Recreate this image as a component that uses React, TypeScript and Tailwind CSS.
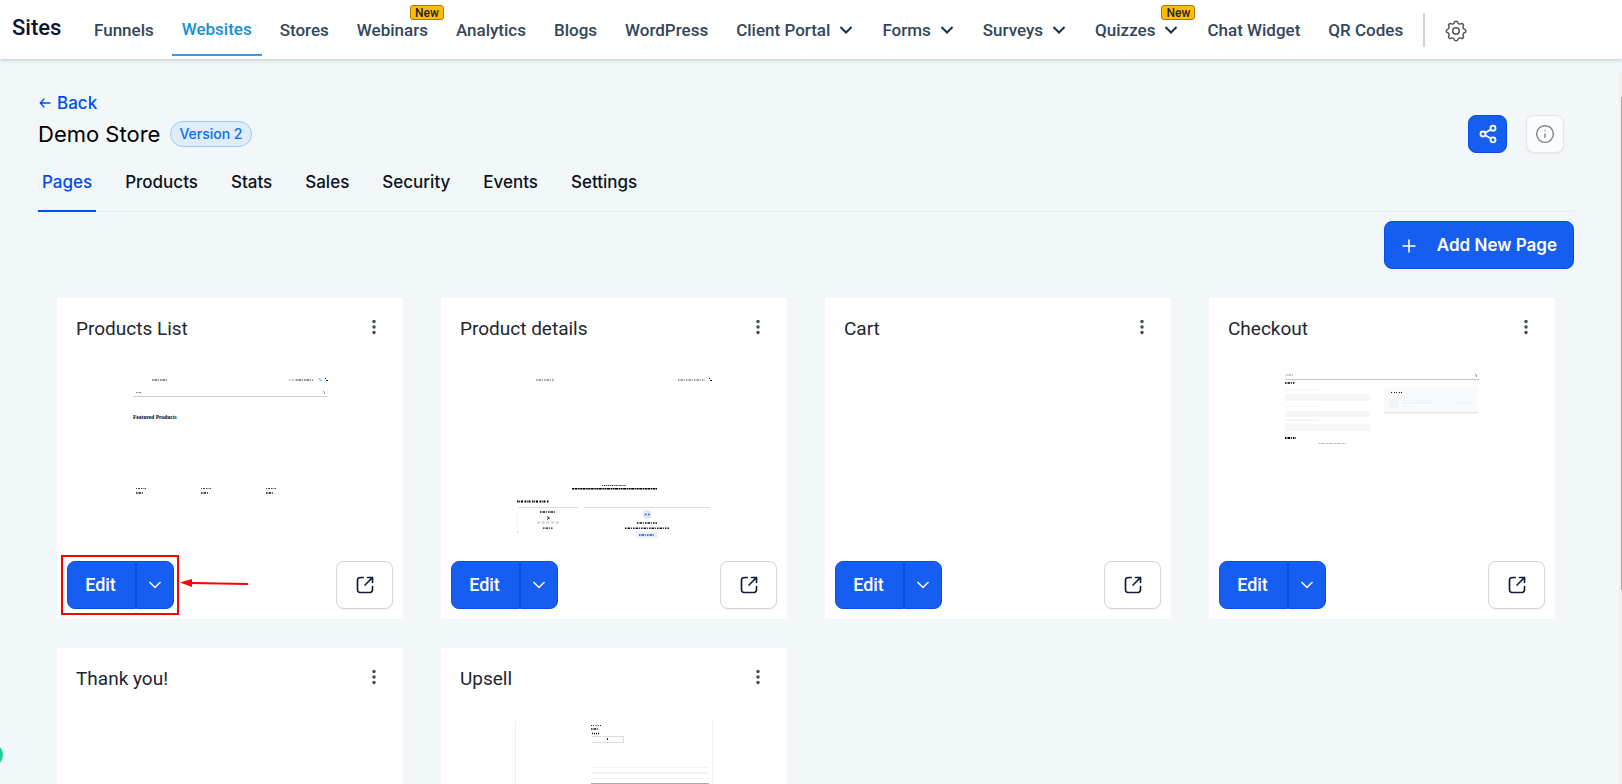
import React from "react";

type NavItem = { label: string; active?: boolean; badge?: boolean; menu?: boolean };

const NAV: NavItem[] = [
  { label: "Funnels" },
  { label: "Websites", active: true },
  { label: "Stores" },
  { label: "Webinars", badge: true },
  { label: "Analytics" },
  { label: "Blogs" },
  { label: "WordPress" },
  { label: "Client Portal", menu: true },
  { label: "Forms", menu: true },
  { label: "Surveys", menu: true },
  { label: "Quizzes", menu: true, badge: true },
  { label: "Chat Widget" },
  { label: "QR Codes" },
];

const TABS = ["Pages", "Products", "Stats", "Sales", "Security", "Events", "Settings"];

function Chevron({ className }: { className: string }) {
  return (
    <svg viewBox="0 0 16 16" className={className} fill="none" stroke="currentColor" aria-hidden="true">
      <path d="M2.5 5l5.500 5.500L13.500 5" />
    </svg>
  );
}

/* A row of greeked text: short dashes standing in for words too small to read. */
function Greek({ x, y, w, h = 1, color = "#111", dash = "1.5 1 2.5 .8 1 1.2" }: {
  x: number; y: number; w: number; h?: number; color?: string; dash?: string;
}) {
  return <path d={`M${x} ${y}h${w}`} stroke={color} strokeWidth={h} strokeDasharray={dash} />;
}

function ProductsPreview() {
  return (
    <>
      <Greek x={95} y={20} w={15} />
      <Greek x={232} y={20} w={8} color="#999" />
      <Greek x={239} y={20} w={17} />
      <path d="M261.500 18.500h1v1h1v1h1" stroke="#4aa8e0" fill="none" strokeWidth=".8" />
      <path d="M268 18.500h1M269 20.500h2" stroke="#222" />
      <Greek x={79} y={32.5} w={6} color="#888" />
      <path d="M266 31l1.500 1.500v1.500" stroke="#777" fill="none" strokeWidth=".8" />
      <path d="M76 36.500h194" stroke="#ccc" />
      <text x="76" y="59" fontSize="5.500" fontWeight="700" fill="#000" fontFamily="Liberation Serif, serif">Featured Products</text>
      {[79, 144, 209].map((x) => (
        <g key={x}>
          <Greek x={x} y={128.5} w={10} color="#444" dash="1 1 2 1 1 .5" />
          <Greek x={x} y={133} w={8} h={1.5} />
        </g>
      ))}
    </>
  );
}

function DetailsPreview() {
  return (
    <>
      <Greek x={95} y={20} w={18} color="#444" />
      <Greek x={237} y={20} w={27} color="#444" />
      <path d="M268 18.500h1M269 20.500h2" stroke="#222" />
      <Greek x={161} y={125.5} w={24} color="#333" dash="1 .8 1.500 .6" />
      <Greek x={131} y={128.8} w={85} h={1.5} color="#000" dash="2 .5 3 .6 1.500 .5" />
      <Greek x={76} y={141.5} w={32} h={2} color="#000" dash="1.500 .7 1 .8 2 1.500" />
      <path d="M77 147.500h60M143 147.500h126" stroke="#ddd" />
      <path d="M76.500 149v23" stroke="#f5f5f5" />
      <path d="M76 172.500h1" stroke="#bbb" />
      <Greek x={99} y={152} w={16} h={1.4} />
      <path d="M106 156.500l2.500 1.500-2.500 1.500" stroke="#111" fill="none" strokeWidth=".9" />
      <path d="M96 162.500h22" stroke="#d3d6e2" strokeWidth="2.500" strokeDasharray="3 1.700" />
      <Greek x={102} y={168.2} w={10} h={1.3} />
      <circle cx="206" cy="154.500" r="4.500" fill="#dbe6fd" />
      <path d="M204 154.500h1.500M207 154.500h1.500" stroke="#2b4be8" strokeWidth="1.500" />
      <Greek x={196} y={163} w={20} h={1.5} />
      <Greek x={184} y={168.2} w={44} h={1.4} />
      <path d="M195 172h22v6h-22z" fill="#eaf1fe" />
      <Greek x={198} y={175} w={16} h={1.5} color="#1248c9" />
    </>
  );
}

function CheckoutPreview() {
  return (
    <>
      <Greek x={77} y={15} w={7} color="#888" />
      <path d="M266 14l1.500 1v2" stroke="#777" fill="none" strokeWidth=".8" />
      <path d="M76 19.500h194" stroke="#c4c4c4" />
      <Greek x={76} y={23} w={10} h={1.6} color="#000" />
      <g fill="#f5f6f8">
        <path d="M76 29h34v2h-34zM76 46h34v1h-34zM76 59h34v2h-34z" />
        <path d="M76 34h85v7h-85zM76 51h85v6h-85zM76 64h85v7h-85z" />
      </g>
      <Greek x={76} y={78} w={11} h={1.8} color="#000" />
      <Greek x={110} y={83.5} w={27} color="#aaa" />
      <rect x="175" y="28" width="94" height="26" rx="1" fill="#f3f4f6" />
      <rect x="175" y="28" width="94" height="25" rx="1" fill="#e6e8eb" />
      <rect x="175" y="27" width="94" height="25" rx="1" fill="#f9fafc" />
      <Greek x={182} y={32.5} w={11} dash="1 2 1 1" />
      <path d="M180 39h10v9h-10zM193 40h30v1h-30zM193 42h30v2h-30zM193 46h8v1h-8zM245 42h18v2h-18z" fill="#f2f3f5" />
    </>
  );
}

function UpsellPreview() {
  return (
    <>
      <path d="M74.500 11v179M271.500 11v179" stroke="#eee" />
      <Greek x={150} y={15.5} w={10} color="#222" dash="1 1 1 1.500" />
      <Greek x={150} y={19} w={8} h={1.6} />
      <Greek x={151} y={23.5} w={7} h={1.5} dash="1 1" />
      <path d="M151 26.500h31.500v6h-31.500" stroke="#ddd" fill="none" />
      <path d="M166.500 28v2" stroke="#222" />
      <path d="M150 57.500h118M150 68.500h118" stroke="#f3f3f3" />
      <path d="M150 63h118" stroke="#f3f3f3" strokeWidth="2" />
      <path d="M150 73.500h118" stroke="#aaa" />
    </>
  );
}

type Page = { title: string; preview?: () => React.JSX.Element; marked?: boolean };

const PAGES: Page[] = [
  { title: "Products List", preview: ProductsPreview, marked: true },
  { title: "Product details", preview: DetailsPreview },
  { title: "Cart" },
  { title: "Checkout", preview: CheckoutPreview },
  { title: "Thank you!" },
  { title: "Upsell", preview: UpsellPreview },
];

function PageCard({ page }: { page: Page }) {
  const Preview = page.preview;
  return (
    <article className="flex flex-col bg-white">
      <header className="flex h-[62px] items-center justify-between px-[19px]">
        <h2 className="font-['Roboto',sans-serif] text-[19px] text-[#1d272f]">{page.title}</h2>
        <button type="button" aria-label={`${page.title} options`} className="flex h-5 w-5 items-center justify-center pb-1">
          <svg viewBox="0 0 4 16" className="h-4 w-1 fill-[#3c4f5e]" aria-hidden="true">
            <circle cx="2" cy="2.500" r="1.700" />
            <circle cx="2" cy="8" r="1.700" />
            <circle cx="2" cy="13.500" r="1.700" />
          </svg>
        </button>
      </header>
      <div className="flex h-[191px] justify-center">
        {Preview && (
          <svg viewBox="0 0 346 191" className="h-[191px] w-[346px]" fill="none" role="img" aria-label={`${page.title} preview`}>
            <Preview />
          </svg>
        )}
      </div>
      <footer className="flex items-center justify-between p-[10px]">
        <div className="relative flex">
          <button type="button" className="h-12 w-[69px] rounded-l-lg border border-[#004eeb] bg-[#155eef] pr-0.5 font-['Roboto',sans-serif] text-lg font-medium text-white">
            Edit
          </button>
          <button type="button" aria-label={`More edit actions for ${page.title}`} className="flex h-12 w-[38px] items-center justify-center rounded-r-lg border border-[#004eeb] bg-[#155eef] text-white">
            <Chevron className="h-4 w-4 stroke-[1.500]" />
          </button>
          {page.marked && (
            <>
              <span className="pointer-events-none absolute -inset-y-[6px] -right-[5px] -left-[6px] border-2 border-[#fe0000]" />
              <svg viewBox="0 0 70 12" className="pointer-events-none absolute left-[113px] top-4 h-3 w-[70px]" aria-hidden="true">
                <path d="M10 6l58 1" stroke="#fe0000" strokeWidth="2" />
                <path d="M0 5.500L12 2v8z" fill="#fe0000" />
              </svg>
            </>
          )}
        </div>
        <button type="button" aria-label={`Open ${page.title}`} className="flex h-12 w-[57px] items-center justify-center rounded-lg border border-[#d0d5dd] bg-white shadow-xs">
          <svg viewBox="0 0 24 24" className="h-5 w-5 text-[#101c3c]" fill="none" stroke="currentColor" strokeWidth="2" strokeLinecap="round" strokeLinejoin="round" aria-hidden="true">
            <path d="M21 9V3h-6M21 3l-9 9M10 3H7.800c-1.680 0-2.520 0-3.160.330a3 3 0 0 0-1.310 1.310C3 5.280 3 6.120 3 7.800v8.400c0 1.680 0 2.520.330 3.160a3 3 0 0 0 1.310 1.310c.640.330 1.480.330 3.160.330h8.400c1.680 0 2.520 0 3.160-.330a3 3 0 0 0 1.310-1.310c.330-.640.330-1.480.330-3.160V14" />
          </svg>
        </button>
      </footer>
    </article>
  );
}

export default function App() {
  return (
    <div className="relative flex h-screen flex-col overflow-hidden bg-[#f2f7fa] font-['Inter',sans-serif]">
      <header className="z-10 flex h-[59px] shrink-0 items-center bg-white font-['Roboto',sans-serif] shadow-[0_1px_4px_rgba(0,0,0,0.22)]">
        <div className="w-[84px] shrink-0 pb-1 pl-3 text-[22px] leading-7 font-medium text-[#0b1530]">Sites</div>
        <nav className="flex h-full items-center gap-2">
          {NAV.map((item) => (
            <a
              key={item.label}
              href="#"
              className={
                item.active
                  ? "relative flex h-full items-center px-[10px] text-[17px] font-medium whitespace-nowrap text-[#178fd6] after:absolute after:inset-x-0 after:bottom-[3px] after:h-[2px] after:bg-[#359be0]"
                  : "relative flex h-full items-center px-[10px] pt-0.5 text-[17px] font-medium whitespace-nowrap text-[#33475b]"
              }
            >
              {item.label}
              {item.menu && <Chevron className="mb-0.5 ml-2 h-4 w-4 stroke-2 text-[#1d2f45]" />}
              {item.badge && (
                <span className="absolute top-[5px] -right-[6px] flex h-[15px] w-[34px] items-center justify-center rounded-[3px] border border-[#a67c00] bg-[#ffbc00] text-xs text-[#1b2430]">
                  New
                </span>
              )}
            </a>
          ))}
        </nav>
        <div className="ml-[10px] h-[34px] w-[2px] shrink-0 bg-[#d0d3da]" />
        <button type="button" aria-label="Settings" className="ml-[18px] shrink-0 pt-0.5">
          <svg viewBox="0 0 24 24" className="h-[26px] w-[26px] text-[#555]" fill="none" stroke="currentColor" strokeWidth="1.400" strokeLinejoin="round" aria-hidden="true">
            <path d="M10.300 3.600c.400-1.800 3-1.800 3.400 0a1.750 1.750 0 0 0 2.600 1.100c1.550-.950 3.300.830 2.400 2.400a1.750 1.750 0 0 0 1.060 2.570c1.800.420 1.800 2.920 0 3.350a1.750 1.750 0 0 0-1.060 2.570c.940 1.550-.830 3.300-2.400 2.400a1.750 1.750 0 0 0-2.570 1.060c-.420 1.800-2.920 1.800-3.350 0a1.750 1.750 0 0 0-2.570-1.060c-1.550.940-3.300-.830-2.400-2.400a1.750 1.750 0 0 0-1.060-2.570c-1.800-.420-1.800-2.920 0-3.350a1.750 1.750 0 0 0 1.060-2.570c-.940-1.550.830-3.300 2.400-2.400 1 .600 2.300.070 2.500-1.100z" transform="translate(0 .650)" />
            <circle cx="12" cy="12" r="3" />
          </svg>
        </button>
      </header>

      <main className="flex min-h-0 flex-1 flex-col overflow-y-auto pr-12 pl-[38px] [scrollbar-width:none]">
        <div className="flex shrink-0 items-start justify-between pt-8">
          <div>
            <a href="#" className="flex items-center gap-[5px] text-[17px] leading-6 font-medium text-[#004eeb]">
              <svg viewBox="0 0 14 14" className="h-[14px] w-[14px]" fill="none" stroke="currentColor" strokeWidth="1.300" strokeLinecap="round" strokeLinejoin="round" aria-hidden="true">
                <path d="M12 7H2.500M6 3L2.300 7 6 11" />
              </svg>
              Back
            </a>
            <div className="mt-[3px] flex items-center gap-[10px]">
              <h1 className="text-[22px] leading-8 text-black">Demo Store</h1>
              <span className="flex h-[26px] items-center rounded-full border border-[#9cc8fb] bg-[#dfecf9] px-2 text-sm font-medium text-[#0a6cf5]">Version 2</span>
            </div>
          </div>
          <div className="mr-[10px] flex gap-[19px] pt-6">
            <button type="button" aria-label="Share" className="flex h-[38px] w-[39px] items-center justify-center rounded-lg border border-[#004eeb] bg-[#155eef] text-white">
              <svg viewBox="0 0 24 24" className="h-5 w-5" fill="none" stroke="currentColor" strokeWidth="2.200" aria-hidden="true">
                <circle cx="18" cy="5" r="3" />
                <circle cx="6" cy="12" r="3" />
                <circle cx="18" cy="19" r="3" />
                <path d="M8.600 13.500l6.800 4M15.400 6.500l-6.800 4" />
              </svg>
            </button>
            <button type="button" aria-label="Information" className="flex h-[38px] w-[38px] items-center justify-center rounded-lg border border-[#e2e6ec] bg-[#fafcfd] text-[#7b8696] shadow-xs">
              <svg viewBox="0 0 24 24" className="h-5 w-5" fill="none" stroke="currentColor" strokeWidth="1.700" strokeLinecap="round" aria-hidden="true">
                <circle cx="12" cy="12" r="10" />
                <path d="M12 16v-4M12 8h.010" />
              </svg>
            </button>
          </div>
        </div>

        <nav className="mt-[10px] flex shrink-0 gap-[25px] border-b border-[#e7ecf0]">
          {TABS.map((tab, i) => (
            <a
              key={tab}
              href="#"
              className={
                i === 0
                  ? "-mb-px flex h-[49px] border-b-2 border-[#004eeb] px-[4px] pt-[7px] text-[17px] leading-6 font-medium text-[#004eeb]"
                  : "flex h-12 px-[4px] pt-[7px] text-[17px] leading-6 font-medium text-[#0c111d]"
              }
            >
              {tab}
            </a>
          ))}
        </nav>

        <button type="button" className="mt-[9px] flex h-12 shrink-0 items-center gap-[18px] self-end rounded-lg border border-[#004eeb] bg-[#155eef] pt-px pr-4 pl-[14px] text-[17px] font-semibold text-white">
          <svg viewBox="0 0 20 20" className="h-5 w-5" fill="none" stroke="currentColor" strokeWidth="1.600" strokeLinecap="round" aria-hidden="true">
            <path d="M10 4v12M4 10h12" />
          </svg>
          Add New Page
        </button>

        <section aria-label="Store pages" className="mt-[29px] mr-[19px] ml-[19px] grid shrink-0 grid-cols-4 gap-x-[38px] gap-y-[29px] pb-8">
          {PAGES.map((page) => (
            <PageCard key={page.title} page={page} />
          ))}
        </section>
      </main>

      <div className="absolute top-[72px] right-0 bottom-0 w-[3px] bg-[#f1f1f1] pt-[25px] pl-[2px]" aria-hidden="true">
        <div className="h-[493px] bg-[#a9a9a9]" />
      </div>
      <div className="absolute bottom-[17px] -left-[21px] h-6 w-6 rounded-full bg-[#1fd093]" aria-hidden="true" />
    </div>
  );
}
